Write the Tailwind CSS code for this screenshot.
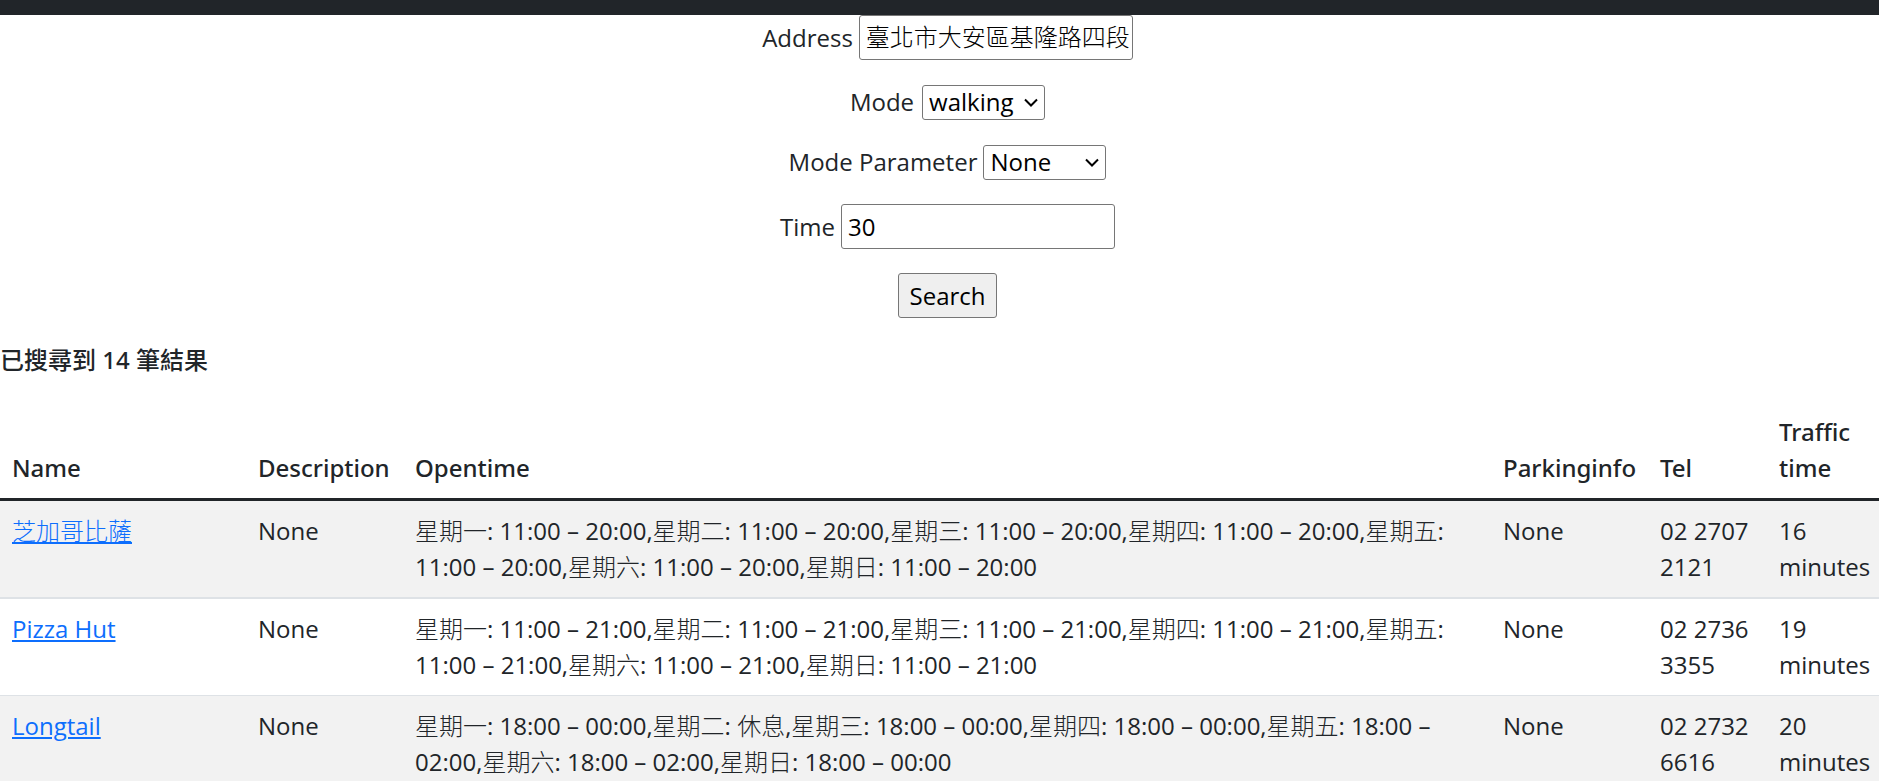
<!DOCTYPE html>
<html lang="zh-Hant">
<head>
<meta charset="utf-8">
<meta name="viewport" content="width=device-width, initial-scale=1">
<title>Search</title>
<script src="https://cdn.jsdelivr.net/npm/@tailwindcss/browser@4"></script>
</head>
<body class="bg-white font-['Open_Sans','Noto_Sans_CJK_TC_Light','Noto_Sans_CJK_TC',sans-serif] text-[24px] leading-9 text-[#212529] overflow-x-hidden">
<header class="h-[15px] bg-[#212529]"></header>
<main>
  <form class="flex flex-col items-center gap-6 pl-4">
    <div class="flex items-center gap-1.5">
      <label for="address">Address</label>
      <input id="address" type="text" value="臺北市大安區基隆路四段" class="h-[45px] w-[274px] rounded-[3px] border border-[#767676] bg-white pb-1 pl-1.5 pr-0.5 font-light text-black">
    </div>
    <div class="flex h-9 items-center gap-2">
      <label for="mode">Mode</label>
      <div class="relative flex">
        <select id="mode" class="h-[35px] w-[123px] appearance-none rounded-[3px] border border-[#767676] bg-white pl-1.5 leading-8 text-black">
          <option>walking</option>
        </select>
        <svg class="pointer-events-none absolute right-1.5 top-3 h-3 w-4" viewBox="0 0 16 12" fill="none" stroke="#000" stroke-width="2"><path d="M2 2.5L8 8.5L14 2.5"/></svg>
      </div>
    </div>
    <div class="flex h-9 items-center gap-1.5">
      <label for="param">Mode Parameter</label>
      <div class="relative flex">
        <select id="param" class="h-[35px] w-[123px] appearance-none rounded-[3px] border border-[#767676] bg-white pl-1.5 leading-8 text-black">
          <option>None</option>
        </select>
        <svg class="pointer-events-none absolute right-1.5 top-3 h-3 w-4" viewBox="0 0 16 12" fill="none" stroke="#000" stroke-width="2"><path d="M2 2.5L8 8.5L14 2.5"/></svg>
      </div>
    </div>
    <div class="flex items-center gap-1.5">
      <label for="time">Time</label>
      <input id="time" type="text" value="30" class="h-[45px] w-[274px] rounded-[3px] border border-[#767676] bg-white pl-1.5 pr-0.5 text-black">
    </div>
    <button type="submit" class="h-[45px] w-[99px] rounded-[3px] border border-[#767676] bg-[#efefef] text-black">Search</button>
  </form>
  <h5 class="my-6 font-['Noto_Sans','Noto_Sans_CJK_TC',sans-serif] font-medium">已搜尋到 14 筆結果</h5>
  <table class="w-full table-fixed border-collapse text-left">
    <colgroup>
      <col class="w-[246px]"><col class="w-[157px]"><col><col class="w-[157px]"><col class="w-[119px]"><col class="w-[112px]">
    </colgroup>
    <thead class="border-b-3 border-[#212529] align-bottom font-['Noto_Sans','Noto_Sans_CJK_TC',sans-serif]">
      <tr>
        <th class="p-3 font-medium">Name</th>
        <th class="p-3 font-medium">Description</th>
        <th class="p-3 font-medium">Opentime</th>
        <th class="p-3 font-medium">Parkinginfo</th>
        <th class="p-3 font-medium">Tel</th>
        <th class="py-3 pl-3 font-medium">Traffic time</th>
      </tr>
    </thead>
    <tbody class="align-top">
      <tr class="border-b-2 border-[#dee2e6] bg-[#f2f2f2]">
        <td class="p-3 font-light"><a href="#" class="text-[#0d6efd] underline">芝加哥比薩</a></td>
        <td class="p-3">None</td>
        <td class="p-3">星期一: 11:00 – 20:00,星期二: 11:00 – 20:00,星期三: 11:00 – 20:00,星期四: 11:00 – 20:00,星期五: 11:00 – 20:00,星期六: 11:00 – 20:00,星期日: 11:00 – 20:00</td>
        <td class="p-3">None</td>
        <td class="p-3">02 2707 2121</td>
        <td class="py-3 pl-3">16 minutes</td>
      </tr>
      <tr class="border-b border-[#dee2e6]">
        <td class="p-3"><a href="#" class="text-[#0d6efd] underline">Pizza Hut</a></td>
        <td class="p-3">None</td>
        <td class="p-3">星期一: 11:00 – 21:00,星期二: 11:00 – 21:00,星期三: 11:00 – 21:00,星期四: 11:00 – 21:00,星期五: 11:00 – 21:00,星期六: 11:00 – 21:00,星期日: 11:00 – 21:00</td>
        <td class="p-3">None</td>
        <td class="p-3">02 2736 3355</td>
        <td class="py-3 pl-3">19 minutes</td>
      </tr>
      <tr class="border-b border-[#dee2e6] bg-[#f2f2f2]">
        <td class="p-3"><a href="#" class="text-[#0d6efd] underline">Longtail</a></td>
        <td class="p-3">None</td>
        <td class="p-3">星期一: 18:00 – 00:00,星期二: 休息,星期三: 18:00 – 00:00,星期四: 18:00 – 00:00,星期五: 18:00 – 02:00,星期六: 18:00 – 02:00,星期日: 18:00 – 00:00</td>
        <td class="p-3">None</td>
        <td class="p-3">02 2732 6616</td>
        <td class="py-3 pl-3">20 minutes</td>
      </tr>
    </tbody>
  </table>
</main>
</body>
</html>
